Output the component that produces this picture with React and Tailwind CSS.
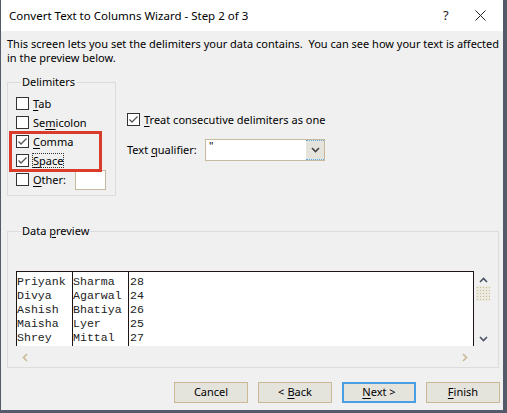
import React from 'react'

const UI = { fontFamily: '"Noto Sans", "Liberation Sans", sans-serif' }
const MONO = { fontFamily: '"Liberation Mono", "Courier New", monospace' }

const rows = [
  ['Priyank', 'Sharma', '28'],
  ['Divya', 'Agarwal', '24'],
  ['Ashish', 'Bhatiya', '26'],
  ['Maisha', 'Lyer', '25'],
  ['Shrey', 'Mittal', '27'],
]

function Check({ checked }) {
  return (
    <span className="w-[13px] h-[13px] border border-[#333] bg-white flex items-center justify-center shrink-0">
      {checked && (
        <svg width="11" height="11" viewBox="0 0 11 11">
          <path d="M1.5 5.5 L4 8 L9.5 2.5" fill="none" stroke="#555" strokeWidth="1.3" />
        </svg>
      )}
    </span>
  )
}

function Option({ checked, pre, u, post, focus }) {
  return (
    <div className="flex items-center gap-[4px] h-[19px]">
      <Check checked={checked} />
      <span className={focus ? 'outline outline-1 outline-dotted outline-[#333] leading-[13px]' : 'leading-[13px]'}>
        {pre}<u className="underline-offset-2">{u}</u>{post}
      </span>
    </div>
  )
}

function Button({ children, primary }) {
  return (
    <button
      className={`w-[74px] h-[21px] flex items-center justify-center bg-[#e4e3dc] text-[11px] text-black ${
        primary ? 'border-2 border-[#4a9fe3]' : 'border border-[#c9b995]'
      }`}
    >
      {children}
    </button>
  )
}

function Chevron({ d, color = '#4b5265' }) {
  return (
    <svg width="9" height="6" viewBox="0 0 9 6">
      <path d={d} fill="none" stroke={color} strokeWidth="1.6" />
    </svg>
  )
}

export default function App() {
  return (
    <div className="w-[507px] h-[413px] bg-[#545a6a] pl-px" style={UI}>
      <div className="w-[502px] h-[410px] bg-[#f0f0f0] flex flex-col text-[11px] text-black">
        {/* title bar */}
        <div className="h-[31px] bg-white flex items-center pl-[8px] shrink-0">
          <span className="flex-1 text-[11.5px]">Convert Text to Columns Wizard - Step 2 of 3</span>
          <span className="w-[14px] text-[13px] text-[#222]">?</span>
          <span className="w-[46px] flex justify-center">
            <svg width="11" height="11" viewBox="0 0 11 11">
              <path d="M0.5 0.5 L10.5 10.5 M10.5 0.5 L0.5 10.5" stroke="#222" strokeWidth="1" />
            </svg>
          </span>
        </div>

        {/* description */}
        <div className="pl-[6px] pt-[6px] leading-[14px] whitespace-pre">
          {'This screen lets you set the delimiters your data contains.  You can see how your text is affected\nin the preview below.'}
        </div>

        <div className="flex pl-[6px] mt-[10px]">
          {/* delimiters group */}
          <div className="relative">
            <fieldset className="w-[109px] h-[121px] border border-[#dcdcdc] pl-[8px] pt-[5px]">
              <legend className="ml-[5px] px-[1px] leading-[14px]">Delimiters</legend>
              <Option pre="" u="T" post="ab" />
              <Option pre="Se" u="m" post="icolon" />
              <Option checked pre="" u="C" post="omma" />
              <Option checked focus pre="" u="S" post="pace" />
              <div className="flex items-center h-[19px]">
                <Option pre="" u="O" post="ther:" />
                <span className="ml-[9px] w-[31px] h-[20px] bg-white border border-[#c7b99e]" />
              </div>
            </fieldset>
            <div className="absolute left-[2px] top-[56px] w-[93px] h-[41px] border-[3px] border-[#db3b2b]" />
          </div>

          {/* right options */}
          <div className="pl-[11px] pt-[35px] flex flex-col">
            <Option checked pre="" u="T" post="reat consecutive delimiters as one" />
            <div className="flex items-center mt-[10px]">
              <span className="w-[78px]">
                Text <u className="underline-offset-2">q</u>ualifier:
              </span>
              <div className="w-[120px] h-[22px] flex border border-[#c7b99e] bg-white">
                <span className="flex-1 pl-[3px] leading-[12px]">"</span>
                <span className="w-[18px] bg-[#e4e3dc] border-y border-dotted border-[#5aaae8] flex items-center justify-center">
                  <Chevron d="M1 1 L4.5 4.5 L8 1" color="#444" />
                </span>
              </div>
            </div>
          </div>
        </div>

        {/* data preview */}
        <fieldset className="ml-[6px] mt-[28px] w-[492px] h-[144px] border border-[#dcdcdc] pl-[8px] pt-[33px]">
          <legend className="ml-[5px] px-[1px] leading-[14px]">
            Data <u className="underline-offset-2">p</u>review
          </legend>
          <div className="flex">
            <div className="w-[458px] h-[75px] bg-white border-x border-t border-[#1d1418] pt-[3px] overflow-hidden flex" style={MONO}>
              {[0, 1, 2].map((c) => (
                <div
                  key={c}
                  className={`flex flex-col text-[11.6px] leading-[14px] text-[#222] ${
                    c < 2 ? 'w-[56px] border-r border-[#1d1418] -mt-[3px] pt-[3px] h-[75px]' : 'pl-px'
                  }`}
                >
                  {rows.map((r) => (
                    <span key={r[0]} className="whitespace-pre">{r[c]}</span>
                  ))}
                </div>
              ))}
            </div>
            <div className="w-[18px] flex flex-col items-center pt-[6px]">
              <Chevron d="M1 5 L4.5 1.5 L8 5" />
              <span className="mt-[3px] w-[14px] h-[15px] bg-[radial-gradient(#c9b995_1px,transparent_1px)] bg-[length:3px_3px] bg-[#ece9df]" />
              <span className="mt-[35px]"><Chevron d="M1 1 L4.5 4.5 L8 1" /></span>
            </div>
          </div>
          <div className="w-[458px] flex justify-between px-[6px] pt-[7px]">
            <svg width="6" height="9" viewBox="0 0 6 9"><path d="M5 1 L1.5 4.5 L5 8" fill="none" stroke="#c9b995" strokeWidth="1.6" /></svg>
            <svg width="6" height="9" viewBox="0 0 6 9"><path d="M1 1 L4.5 4.5 L1 8" fill="none" stroke="#c9b995" strokeWidth="1.6" /></svg>
          </div>
        </fieldset>

        {/* buttons */}
        <div className="flex justify-end gap-[10px] pr-[3px] mt-[14px]">
          <Button>Cancel</Button>
          <Button>&lt; <u className="underline-offset-2 ml-[3px]">B</u>ack</Button>
          <Button primary><u className="underline-offset-2">N</u>ext &gt;</Button>
          <Button><u className="underline-offset-2">F</u>inish</Button>
        </div>
      </div>
    </div>
  )
}
